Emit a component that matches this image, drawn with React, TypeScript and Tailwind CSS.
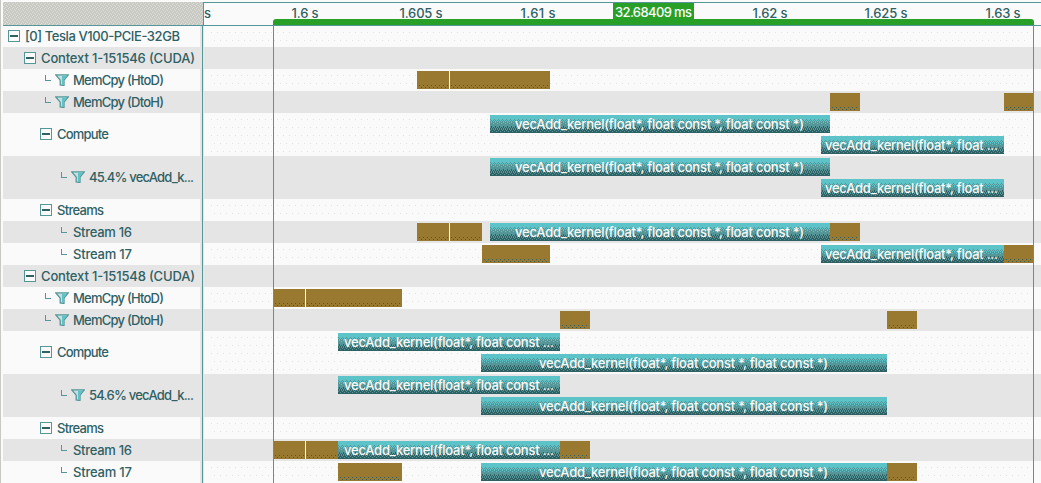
type Bar = { x: number; w: number; y?: number; kernel?: string; split?: number };
type Kind = "minus" | "filter" | "leaf";
type RowData = { h: number; indent: number; kind: Kind; label: string; width: number; bars: Bar[] };

const LONG = "vecAdd_kernel(float*, float const *, float const *)";
const MID = "vecAdd_kernel(float*, float const ...";
const SHORT = "vecAdd_kernel(float*, float ...";

const rows: RowData[] = [
  { h: 21, indent: 5, kind: "minus", label: "[0] Tesla V100-PCIE-32GB", width: 155, bars: [] },
  { h: 22, indent: 21, kind: "minus", label: "Context 1-151546 (CUDA)", width: 154, bars: [] },
  { h: 22, indent: 42, kind: "filter", label: "MemCpy (HtoD)", width: 91, bars: [{ x: 417, w: 133, split: 32 }] },
  { h: 22, indent: 42, kind: "filter", label: "MemCpy (DtoH)", width: 91, bars: [{ x: 830, w: 30 }, { x: 1004, w: 30 }] },
  { h: 43, indent: 37, kind: "minus", label: "Compute", width: 52, bars: [{ x: 490, w: 340, kernel: LONG }, { x: 821, w: 183, y: 23, kernel: SHORT }] },
  { h: 43, indent: 58, kind: "filter", label: "45.4% vecAdd_k...", width: 105, bars: [{ x: 490, w: 340, kernel: LONG }, { x: 821, w: 183, y: 23, kernel: SHORT }] },
  { h: 22, indent: 37, kind: "minus", label: "Streams", width: 47, bars: [] },
  { h: 22, indent: 58, kind: "leaf", label: "Stream 16", width: 59, bars: [{ x: 417, w: 65, split: 32 }, { x: 490, w: 340, kernel: LONG }, { x: 830, w: 30 }] },
  { h: 22, indent: 58, kind: "leaf", label: "Stream 17", width: 59, bars: [{ x: 482, w: 68 }, { x: 821, w: 183, kernel: SHORT }, { x: 1004, w: 30 }] },
  { h: 22, indent: 21, kind: "minus", label: "Context 1-151548 (CUDA)", width: 154, bars: [] },
  { h: 22, indent: 42, kind: "filter", label: "MemCpy (HtoD)", width: 91, bars: [{ x: 273, w: 129, split: 32 }] },
  { h: 22, indent: 42, kind: "filter", label: "MemCpy (DtoH)", width: 91, bars: [{ x: 560, w: 30 }, { x: 887, w: 30 }] },
  { h: 43, indent: 37, kind: "minus", label: "Compute", width: 52, bars: [{ x: 338, w: 222, kernel: MID }, { x: 481, w: 406, y: 23, kernel: LONG }] },
  { h: 43, indent: 58, kind: "filter", label: "54.6% vecAdd_k...", width: 105, bars: [{ x: 338, w: 222, kernel: MID }, { x: 481, w: 406, y: 23, kernel: LONG }] },
  { h: 22, indent: 37, kind: "minus", label: "Streams", width: 47, bars: [] },
  { h: 22, indent: 58, kind: "leaf", label: "Stream 16", width: 59, bars: [{ x: 273, w: 65, split: 32 }, { x: 338, w: 222, kernel: MID }, { x: 560, w: 30 }] },
  { h: 22, indent: 58, kind: "leaf", label: "Stream 17", width: 59, bars: [{ x: 338, w: 64 }, { x: 481, w: 406, kernel: LONG }, { x: 887, w: 30 }] },
];

const ticks = [
  { x: 304.5, t: "1.6 s", w: 27 },
  { x: 420.5, t: "1.605 s", w: 43 },
  { x: 537.5, t: "1.61 s", w: 35 },
  { x: 769.5, t: "1.62 s", w: 35 },
  { x: 885.5, t: "1.625 s", w: 43 },
  { x: 1002.5, t: "1.63 s", w: 35 },
];

function Patterns() {
  return (
    <svg className="absolute size-0" aria-hidden="true">
      <defs>
        <pattern id="stipple" width="6" height="16" patternUnits="userSpaceOnUse">
          <path d="M1 6h1v1h-1zM4 14h1v1h-1z" fill="#e2e2e2" />
        </pattern>
        <pattern id="memdots" width="4" height="18" patternUnits="userSpaceOnUse">
          <path d="M2 14h1v1h-1zM0 16h1v1h-1z" fill="#2f6064" />
        </pattern>
        <pattern id="kernel" width="4" height="18" patternUnits="userSpaceOnUse">
          <path d="M0 0h4v18h-4z" fill="#5cc4c8" />
          <path d="M0 7h4v11h-4z" fill="#559799" />
          <path d="M0 14h4v4h-4z" fill="#2f6064" />
          <path d="M0 4h1v1h-1zM1 5h1v1h-1zM3 5h1v1h-1zM0 6h1v1h-1zM2 6h1v1h-1z" fill="#559799" />
          <path d="M1 7h1v1h-1zM3 8h1v1h-1z" fill="#5cc4c8" />
          <path d="M1 11h1v1h-1zM1 12h1v1h-1zM3 12h1v1h-1zM0 13h1v1h-1zM2 13h1v1h-1z" fill="#2f6064" />
          <path d="M1 14h1v1h-1zM3 14h1v1h-1zM0 15h1v1h-1zM2 16h1v1h-1z" fill="#559799" />
        </pattern>
        <pattern id="grain" width="4" height="4" patternUnits="userSpaceOnUse">
          <path d="M0 0h4v4h-4z" fill="#c9c9c4" />
          <path d="M0 0h1v1h-1zM2 1h1v1h-1zM1 2h1v1h-1zM3 3h1v1h-1z" fill="#dededb" />
        </pattern>
      </defs>
    </svg>
  );
}

function MinusBox() {
  return (
    <svg className="mr-[5px] h-3 w-3 shrink-0" viewBox="0 0 12 12" shapeRendering="crispEdges">
      <path d="M.5.5h11v11H.5z" fill="#fafafa" stroke="#559799" />
      <path d="M2 5h8v2H2z" fill="#2f6064" />
    </svg>
  );
}

function Elbow() {
  return (
    <svg className="mb-[5px] h-[6px] w-1.5 shrink-0" viewBox="0 0 6 6" shapeRendering="crispEdges">
      <path d="M.5 0v5.5H6" fill="none" stroke="#559799" />
    </svg>
  );
}

function Funnel() {
  return (
    <svg className="ml-1 mr-1 h-3 w-[14px] shrink-0" viewBox="0 0 14 12">
      <path d="M.8.9h12.4L9 6.2v5.3L5.2 11V6.2z" fill="#c8dddd" stroke="#559799" strokeWidth="1.3" />
      <path d="M7 1.5h4.8L8.8 5.7v5L7 10.5z" fill="#5cc4c8" />
    </svg>
  );
}

function Fit({ text, width, className }: { text: string; width: number; className: string }) {
  return (
    <svg className="h-[18px] shrink-0 overflow-visible" width={width} viewBox={`0 0 ${width} 18`}>
      <text x="0" y="14" textLength={width} className={className}>{text}</text>
    </svg>
  );
}

function Block({ bar }: { bar: Bar }) {
  const textWidth = bar.kernel === LONG ? 289 : bar.kernel === MID ? 210 : 173;
  return (
    <div className="absolute flex h-[18px] items-center justify-center" style={{ left: bar.x - 204, top: bar.y ?? 2, width: bar.w }}>
      <svg className="absolute inset-0 h-full w-full" shapeRendering="crispEdges">
        <rect width="100%" height="100%" fill={bar.kernel ? "url(#kernel)" : "#997830"} />
        {!bar.kernel && <rect x="2" width={bar.w - 4} height="18" fill="url(#memdots)" />}
        {bar.split && <rect x={bar.split} width="1" height="18" fill="#fafafa" />}
      </svg>
      {bar.kernel && (
        <div className={`relative flex ${bar.kernel === MID ? "" : "mr-[2px]"}`}>
          <Fit text={bar.kernel} width={textWidth} className="fill-[#fafafa] text-[13px] font-medium" />
        </div>
      )}
    </div>
  );
}

function Row({ row, index }: { row: RowData; index: number }) {
  const shaded = index % 2 === 1;
  return (
    <div className={`flex w-full shrink-0 ${shaded ? "bg-[#e5e5e5]" : "bg-[#fafafa]"}`} style={{ height: row.h }}>
      <div className={`relative flex w-[197px] shrink-0 items-center ${row.h % 2 ? "pb-px" : ""}`} style={{ paddingLeft: row.indent }}>
        {row.kind === "minus" ? <MinusBox /> : <Elbow />}
        {row.kind === "filter" && <Funnel />}
        {row.kind === "leaf" && <span className="w-[6px] shrink-0" />}
        <Fit text={row.label} width={row.width} className="fill-[#2f6064] text-[13px] font-medium" />
      </div>
      <div className="w-0.5 shrink-0 bg-[#e5e5e5]" />
      <div className="w-px shrink-0 bg-[#559799]" />
      <div className="w-px shrink-0 bg-[#e5e5e5]" />
      <div className="relative flex-1">
        {!shaded && (
          <svg className="absolute inset-0 h-full w-full" shapeRendering="crispEdges">
            <rect x="6" width="820" height={row.h} fill="url(#stipple)" />
          </svg>
        )}
        {row.bars.map((bar) => <Block key={`${bar.x}-${bar.y ?? 2}`} bar={bar} />)}
      </div>
    </div>
  );
}

export default function App() {
  return (
    <div className="relative flex h-[483px] w-[1041px] overflow-hidden bg-[#fafafa] font-['Inter',sans-serif] text-[13px] text-[#2f6064]">
      <Patterns />
      <div className="w-px shrink-0 bg-[#c9c9c4]" />
      <div className="w-0.5 shrink-0 bg-[#fafafa]" />
      <div className="flex min-w-0 flex-1 flex-col">
        <header className="flex h-[26px] shrink-0 pt-0.5">
          <div className="h-6 w-[200px] shrink-0 border-b border-[#559799]">
            <svg className="h-full w-full" shapeRendering="crispEdges"><rect width="200" height="24" fill="url(#grain)" /></svg>
          </div>
          <div className="relative flex-1 border-y border-l border-[#559799]">
            <span className="absolute left-0 top-px font-medium leading-[18px]">s</span>
            {ticks.map((tick) => (
              <div key={tick.t} className="absolute top-px flex -translate-x-1/2" style={{ left: tick.x - 203.5 }}>
                <Fit text={tick.t} width={tick.w} className="fill-[#2f6064] text-[13px] font-medium" />
              </div>
            ))}
            <div className="absolute left-[69px] top-4 h-1.5 w-[761px] rounded-t-[3px] bg-[#28a028]" />
            <div className="absolute left-[409px] top-0 flex h-[18px] w-[81px] items-center justify-center bg-[#28a028]">
              <Fit text="32.68409 ms" width={77} className="fill-[#fafafa] text-[13px] font-medium" />
            </div>
          </div>
        </header>
        <main className="flex flex-col">
          {rows.map((row, index) => <Row key={index} row={row} index={index} />)}
        </main>
      </div>
      <div className="absolute bottom-0 left-[273px] top-[25px] w-px bg-[#559799]" />
      <div className="absolute bottom-0 left-[1033px] top-[25px] w-px bg-[#559799]" />
    </div>
  );
}
